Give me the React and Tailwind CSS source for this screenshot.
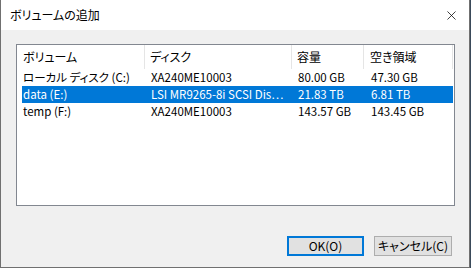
import { X } from "lucide-react";

const rows = [
  { name: "ローカル ディスク (C:)", disk: "XA240ME10003", size: "80.00 GB", free: "47.30 GB" },
  { name: "data (E:)", disk: "LSI MR9265-8i SCSI Dis…", size: "21.83 TB", free: "6.81 TB", selected: true },
  { name: "temp (F:)", disk: "XA240ME10003", size: "143.57 GB", free: "143.45 GB" },
];

const App = () => {
  return (
    <div
      className="w-[471px] h-[268px] bg-[#3a4a5a] text-[12px] text-black overflow-hidden [font-feature-settings:'palt']"
      style={{ fontFamily: '"Noto Sans CJK JP", "Noto Sans", sans-serif' }}
    >
      <div className="w-[470px] h-[268px] flex flex-col border-x border-b border-[#707070] bg-[#f0f0f0]">
        {/* Title bar */}
        <div className="h-[30px] bg-white flex items-center justify-between pl-[9px] pr-[10px]">
          <span className="text-[12px] leading-[16px]">ボリュームの追加</span>
          <X size={15} strokeWidth={1.2} className="text-black" />
        </div>

        {/* Body */}
        <div className="flex-1 flex flex-col pl-[15px] pt-[14px]">
          <div className="w-[439px] h-[162px] border border-[#828790] bg-white">
            {/* Header */}
            <div className="flex h-[24px] items-center">
              <div className="w-[128px] h-full flex items-center pl-[6px] border-r border-[#e5e5e5]">ボリューム</div>
              <div className="w-[147px] h-full flex items-center pl-[5px] border-r border-[#e5e5e5]">ディスク</div>
              <div className="w-[72px] h-full flex items-center pl-[5px] border-r border-[#e5e5e5]">容量</div>
              <div className="w-[89px] h-full flex items-center pl-[6px] border-r border-[#e5e5e5]">空き領域</div>
            </div>

            {/* Rows */}
            {rows.map((row, i) => (
              <div
                key={i}
                className={`ml-[5px] w-[431px] h-[17px] flex text-[11.5px] leading-[17px] ${
                  row.selected ? "bg-[#0078d7] text-white" : ""
                }`}
              >
                <div className="w-[123px] shrink-0 pl-[1px] whitespace-nowrap">{row.name}</div>
                <div className="w-[147px] shrink-0 pl-[6px] whitespace-nowrap">{row.disk}</div>
                <div className="w-[72px] shrink-0 pl-[6px] whitespace-nowrap">{row.size}</div>
                <div className="w-[89px] shrink-0 pl-[7px] whitespace-nowrap">{row.free}</div>
              </div>
            ))}
          </div>

          {/* Buttons */}
          <div className="flex justify-end gap-[10px] mt-[30px] pr-[17px]">
            <button className="w-[77px] h-[20px] border-2 border-[#0078d7] bg-[#e1e1e1] flex items-center justify-center leading-[16px]">
              OK(O)
            </button>
            <button className="w-[78px] h-[20px] border border-[#adadad] bg-[#e1e1e1] flex items-center justify-center leading-[16px]">
              キャンセル(C)
            </button>
          </div>
        </div>
      </div>
    </div>
  );
};

export default App;
